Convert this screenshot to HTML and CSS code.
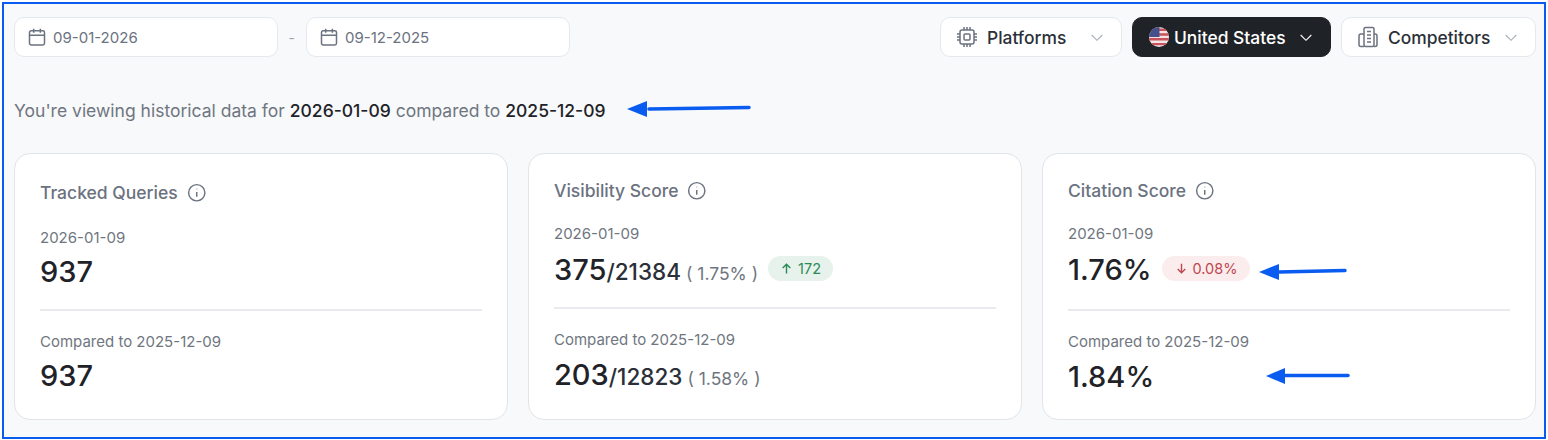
FILE: index.html
```html
<!DOCTYPE html>
<html lang="en">
<head>
    <meta charset="UTF-8">
    <meta name="viewport" content="width=device-width, initial-scale=1.0">
    <title>Historical Data</title>
    <link rel="stylesheet" href="styles.css">
</head>
<body>
    <div class="frame">
        <div class="toolbar">
            <div class="dates">
                <div class="date-field">
                    <svg class="icon-cal" viewBox="0 0 24 24"><rect x="3" y="4.500" width="18" height="17" rx="2"/><path d="M8 2v5M16 2v5M3 10h18"/></svg>
                    09-01-2026
                </div>
                <span class="dash">-</span>
                <div class="date-field">
                    <svg class="icon-cal" viewBox="0 0 24 24"><rect x="3" y="4.500" width="18" height="17" rx="2"/><path d="M8 2v5M16 2v5M3 10h18"/></svg>
                    09-12-2025
                </div>
            </div>
            <div class="filters">
                <button class="filter filter-platforms">
                    <svg class="icon-filter" viewBox="0 0 24 24"><rect x="5" y="5" width="14" height="14" rx="2"/><rect x="9" y="9" width="6" height="6" rx="1"/><path d="M9 2v3M12 2v3M15 2v3M9 19v3M12 19v3M15 19v3M2 9h3M2 12h3M2 15h3M19 9h3M19 12h3M19 15h3"/></svg>
                    <span class="filter-label">Platforms</span>
                    <svg class="chevron" viewBox="0 0 24 24"><path d="M4 9l8 8 8-8"/></svg>
                </button>
                <button class="filter filter-country">
                    <svg class="flag" viewBox="0 0 20 20">
                        <clipPath id="flag-clip"><circle cx="10" cy="10" r="10"/></clipPath>
                        <g clip-path="url(#flag-clip)">
                            <rect width="20" height="20" fill="#f3e4e4"/>
                            <path d="M0 1.500h20v2.400H0zM0 6.300h20v2.400H0zM0 11.100h20v2.400H0zM0 15.900h20v2.400H0z" fill="#c8515c"/>
                            <rect width="10.500" height="10" fill="#45508a"/>
                        </g>
                    </svg>
                    <span class="filter-label">United States</span>
                    <svg class="chevron" viewBox="0 0 24 24"><path d="M4 9l8 8 8-8"/></svg>
                </button>
                <button class="filter filter-competitors">
                    <svg class="icon-filter" viewBox="0 0 24 24"><rect x="8" y="2.500" width="10" height="19" rx="1.500"/><path d="M8 9H5a2 2 0 0 0-2 2v8.500a2 2 0 0 0 2 2h3M18 9h1a2 2 0 0 1 2 2v8.500a2 2 0 0 1-2 2h-1M11 6.500h4M11 10h4M11 13.500h4M11 17h4"/></svg>
                    <span class="filter-label">Competitors</span>
                    <svg class="chevron" viewBox="0 0 24 24"><path d="M4 9l8 8 8-8"/></svg>
                </button>
            </div>
        </div>

        <p class="notice">You're viewing historical data for <strong>2026-01-09</strong> compared to <strong>2025-12-09</strong></p>

        <div class="cards">
            <div class="card card-queries">
                <div class="card-title">Tracked Queries
                    <svg class="icon-info" viewBox="0 0 24 24"><circle cx="12" cy="12" r="10"/><path d="M12 11v6M12 7.200v.6"/></svg>
                </div>
                <div class="stat-date">2026-01-09</div>
                <div class="stat-row"><span class="stat-value">937</span></div>
                <hr class="divider">
                <div class="stat-date">Compared to 2025-12-09</div>
                <div class="stat-row"><span class="stat-value">937</span></div>
            </div>

            <div class="card card-visibility">
                <div class="card-title">Visibility Score
                    <svg class="icon-info" viewBox="0 0 24 24"><circle cx="12" cy="12" r="10"/><path d="M12 11v6M12 7.200v.6"/></svg>
                </div>
                <div class="stat-date">2026-01-09</div>
                <div class="stat-row">
                    <span class="stat-value">375</span><span class="stat-total">/21384</span>
                    <span class="stat-percent">( 1.75% )</span>
                    <span class="badge badge-up">
                        <svg class="badge-arrow" viewBox="0 0 12 12"><path d="M6 10.500V2M2.500 5.500L6 2l3.500 3.500"/></svg>
                        172
                    </span>
                </div>
                <hr class="divider">
                <div class="stat-date">Compared to 2025-12-09</div>
                <div class="stat-row">
                    <span class="stat-value">203</span><span class="stat-total">/12823</span>
                    <span class="stat-percent">( 1.58% )</span>
                </div>
            </div>

            <div class="card card-citation">
                <div class="card-title">Citation Score
                    <svg class="icon-info" viewBox="0 0 24 24"><circle cx="12" cy="12" r="10"/><path d="M12 11v6M12 7.200v.6"/></svg>
                </div>
                <div class="stat-date">2026-01-09</div>
                <div class="stat-row">
                    <span class="stat-value">1.76%</span>
                    <span class="badge badge-down">
                        <svg class="badge-arrow" viewBox="0 0 12 12"><path d="M6 1.500V10M2.500 6.500L6 10l3.500-3.500"/></svg>
                        0.08%
                    </span>
                </div>
                <hr class="divider">
                <div class="stat-date">Compared to 2025-12-09</div>
                <div class="stat-row"><span class="stat-value">1.84%</span></div>
            </div>
        </div>

        <!-- annotation arrows drawn over the screenshot -->
        <svg class="pointer pointer-notice" viewBox="0 0 124 18"><path d="M22 9L122 7.500" /><polygon points="0,9 20,1 20,17"/></svg>
        <svg class="pointer pointer-delta" viewBox="0 0 88 18"><path d="M20 9L86 7.500" /><polygon points="0,9 20,1 20,17"/></svg>
        <svg class="pointer pointer-compare" viewBox="0 0 84 18"><path d="M18 8.500H82" /><polygon points="0,9 19,1 19,17"/></svg>
    </div>
</body>
</html>
```

FILE: styles.css
```css
* {
    box-sizing: border-box;
}
body {
    margin: 0;
    background-color: #fff;
    font-family: Inter, Arial, sans-serif;
    color: #1f2328;
}
.frame {
    position: relative;
    width: 1544px;
    height: 437px;
    margin: 2px 0 0 2px;
    padding: 13px 8px 0 10px;
    background-color: #f8f9fb;
    border: 2px solid #0a5cf0;
}
.toolbar {
    display: flex;
    justify-content: space-between;
}
.dates {
    display: flex;
    align-items: center;
}
.date-field {
    display: flex;
    align-items: center;
    gap: 6px;
    width: 263.5px;
    height: 40px;
    padding-left: 12px;
    background-color: #fff;
    border: 1px solid #e5e8ec;
    border-radius: 10px;
    font-size: 15px;
    color: #6b7280;
}
.dash {
    width: 28.5px;
    text-align: center;
    font-size: 14px;
    color: #9ca3af;
}
.icon-cal {
    width: 20px;
    height: 20px;
    fill: none;
    stroke: #6b7280;
    stroke-width: 1.8;
}
.filters {
    display: flex;
    gap: 10px;
}
.filter {
    display: flex;
    align-items: center;
    height: 40px;
    padding: 0 16px 0 14px;
    background-color: #fff;
    border: 1px solid #e5e8ec;
    border-radius: 10px;
    font-family: inherit;
    font-size: 17.4px;
    font-weight: 500;
    color: #2b3038;
}
.filter-platforms {
    width: 182px;
}
.filter-country {
    width: 199px;
    padding-left: 16px;
    background-color: #1f2328;
    border-color: #1f2328;
    color: #fff;
}
.filter-competitors {
    width: 195px;
}
.filter-label {
    flex: 1;
    padding-top: 1px;
    text-align: left;
}
.filter-platforms .filter-label,
.filter-competitors .filter-label {
    margin-left: 8px;
}
.filter-country .filter-label {
    margin-left: 5px;
}
.icon-filter {
    width: 24px;
    height: 24px;
    fill: none;
    stroke: #6b7280;
    stroke-width: 1.5;
}
.flag {
    width: 20px;
    height: 20px;
}
.chevron {
    width: 16px;
    height: 16px;
    fill: none;
    stroke: #a8aeb7;
    stroke-width: 1.6;
}
.filter-country .chevron {
    stroke: #fff;
}
.notice {
    margin: 44px 0 0;
    font-size: 17.5px;
    line-height: 20px;
    color: #6f7680;
}
.notice strong {
    font-weight: 500;
    color: #1f2328;
}
.cards {
    display: grid;
    grid-template-columns: repeat(3, 494px);
    gap: 20px;
    margin-top: 32px;
}
.card {
    height: 267px;
    padding: 27px 25px 0;
    background-color: #fff;
    border: 1px solid #e1e4e8;
    border-radius: 16px;
}
.card-queries {
    padding-top: 29px;
}
.card-title {
    display: flex;
    align-items: center;
    gap: 9px;
    font-size: 17.5px;
    font-weight: 500;
    line-height: 20px;
    color: #6b7280;
}
.icon-info {
    width: 19.5px;
    height: 19.5px;
    fill: none;
    stroke: #6b7280;
    stroke-width: 1.8;
}
.stat-date {
    margin-top: 23px;
    font-size: 15px;
    line-height: 20px;
    color: #6f7680;
}
.card-queries .stat-date {
    margin-top: 25px;
}
.stat-row {
    display: flex;
    align-items: baseline;
    height: 38px;
    margin-top: 7px;
    line-height: 38px;
}
.divider ~ .stat-row {
    margin-top: 6px;
}
.card-queries .stat-row {
    margin-top: 5px;
}
.stat-value {
    font-size: 29px;
    font-weight: 500;
    color: #1f2328;
}
.stat-total {
    font-size: 22.5px;
    font-weight: 500;
    color: #2b3038;
}
.stat-percent {
    margin-left: 5px;
    font-size: 17.5px;
    color: #6f7680;
}
.badge {
    display: flex;
    align-items: center;
    gap: 5px;
    align-self: center;
    height: 25px;
    margin-bottom: 3px;
    border-radius: 13px;
    font-size: 14.5px;
    line-height: 25px;
}
.badge-up {
    margin-left: 10px;
    padding: 0 12px;
    background-color: #e6f2eb;
    color: #2a8a57;
}
.badge-down {
    margin-left: 10px;
    padding: 0 13px;
    background-color: #fbeded;
    color: #c0474f;
}
.badge-arrow {
    width: 13px;
    height: 13px;
    fill: none;
    stroke: currentColor;
    stroke-width: 1.3;
}
.divider {
    height: 2px;
    margin: 18px 0 0;
    background-color: #e8eaee;
    border: 0;
}
.card-citation .divider {
    margin-top: 20px;
}
.divider + .stat-date,
.card-queries .divider + .stat-date {
    margin-top: 21px;
}
.pointer {
    position: absolute;
    height: 18px;
    fill: #0a5cf0;
    stroke: #0a5cf0;
    stroke-width: 0;
}
.pointer path {
    fill: none;
    stroke-width: 3.5;
    stroke-linecap: round;
}
.pointer-notice {
    left: 623px;
    top: 96px;
    width: 124px;
}
.pointer-delta {
    left: 1255px;
    top: 259px;
    width: 88px;
}
.pointer-compare {
    left: 1262px;
    top: 363px;
    width: 84px;
}
```
